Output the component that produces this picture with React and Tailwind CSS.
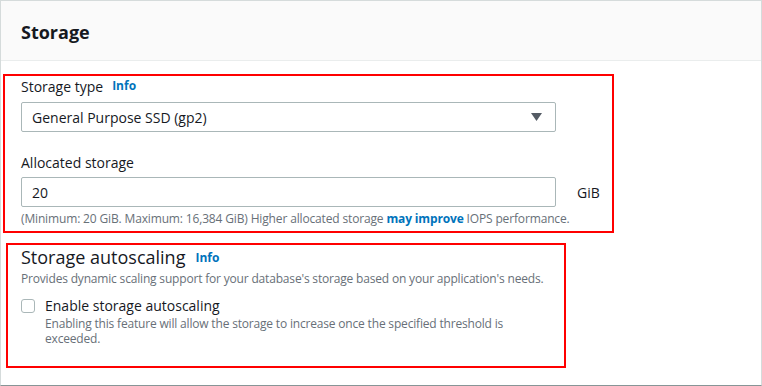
import { useState } from 'react';

function Info({ className = '' }) {
  return <span className={`font-bold text-[12px] text-[#0073bb] ${className}`}>Info</span>;
}

export default function App() {
  const [autoscale, setAutoscale] = useState(false);

  return (
    <div className="w-[762px] h-[386px] bg-white font-['Open_Sans',sans-serif] text-[#16191f]">
      <div className="h-[386px] border border-[#d5dbdb] border-b-[#879596] flex flex-col">
        <div className="h-[60px] shrink-0 bg-[#fafafa] border-b border-[#eaeded] flex items-center px-[20px] pt-[2px]">
          <h2 className="text-[18px] font-bold leading-none">Storage</h2>
        </div>

        <div className="pt-[13px]">
          {/* storage type + allocated storage */}
          <div className="ml-[2px] w-[611px] h-[159px] border-2 border-[#ff0000] pl-[16px] pt-[1px]">
            <div className="flex items-center gap-[9px] h-[18px] text-[14px]">
              <span>Storage type</span>
              <Info />
            </div>
            <div className="mt-[7px] w-[535px] h-[30px] border border-[#aab7b8] rounded-[2px] flex items-center justify-between pl-[10px] pr-[13px] text-[14px]">
              <span>General Purpose SSD (gp2)</span>
              <svg width="11" height="8" viewBox="0 0 11 8">
                <path d="M0 0 H11 L5.5 8 Z" fill="#545b64" />
              </svg>
            </div>

            <div className="mt-[21px] h-[18px] flex items-center text-[14px]">Allocated storage</div>
            <div className="mt-[6px] flex items-center">
              <div className="w-[535px] h-[30px] border border-[#aab7b8] rounded-[2px] flex items-center pl-[10px] text-[14px]">
                20
              </div>
              <span className="ml-[21px] text-[14px]">GiB</span>
            </div>
            <p className="mt-[4px] text-[12px] tracking-[-0.15px] text-[#687078] leading-[16px]">
              (Minimum: 20 GiB. Maximum: 16,384 GiB) Higher allocated storage{' '}
              <span className="font-bold text-[#0073bb]">may improve</span> IOPS performance.
            </p>
          </div>

          {/* autoscaling */}
          <div className="mt-[10px] ml-[5px] w-[560px] h-[125px] border-2 border-[#ff0000] pl-[13px]">
            <div className="flex items-center gap-[10px] h-[24px]">
              <span className="text-[18px]">Storage autoscaling</span>
              <Info className="mt-[2px]" />
            </div>
            <p className="mt-[2px] text-[12px] tracking-[-0.18px] text-[#687078] leading-[16px]">
              Provides dynamic scaling support for your database's storage based on your application's needs.
            </p>
            <label className="mt-[10px] flex gap-[10px] cursor-pointer">
              <span
                onClick={() => setAutoscale(!autoscale)}
                className="mt-[2px] w-[14px] h-[14px] shrink-0 border border-[#aab7b8] rounded-[3px] bg-white"
              >
                {autoscale && (
                  <svg width="12" height="12" viewBox="0 0 12 12">
                    <path d="M2 6 L5 9 L10 3" stroke="#0073bb" strokeWidth="2" fill="none" />
                  </svg>
                )}
              </span>
              <span>
                <span className="block text-[14px] leading-[18px]">Enable storage autoscaling</span>
                <span className="block mt-[1px] w-[490px] text-[12px] tracking-[-0.18px] text-[#687078] leading-[15px]">
                  Enabling this feature will allow the storage to increase once the specified threshold is
                  exceeded.
                </span>
              </span>
            </label>
          </div>
        </div>
      </div>
    </div>
  );
}
